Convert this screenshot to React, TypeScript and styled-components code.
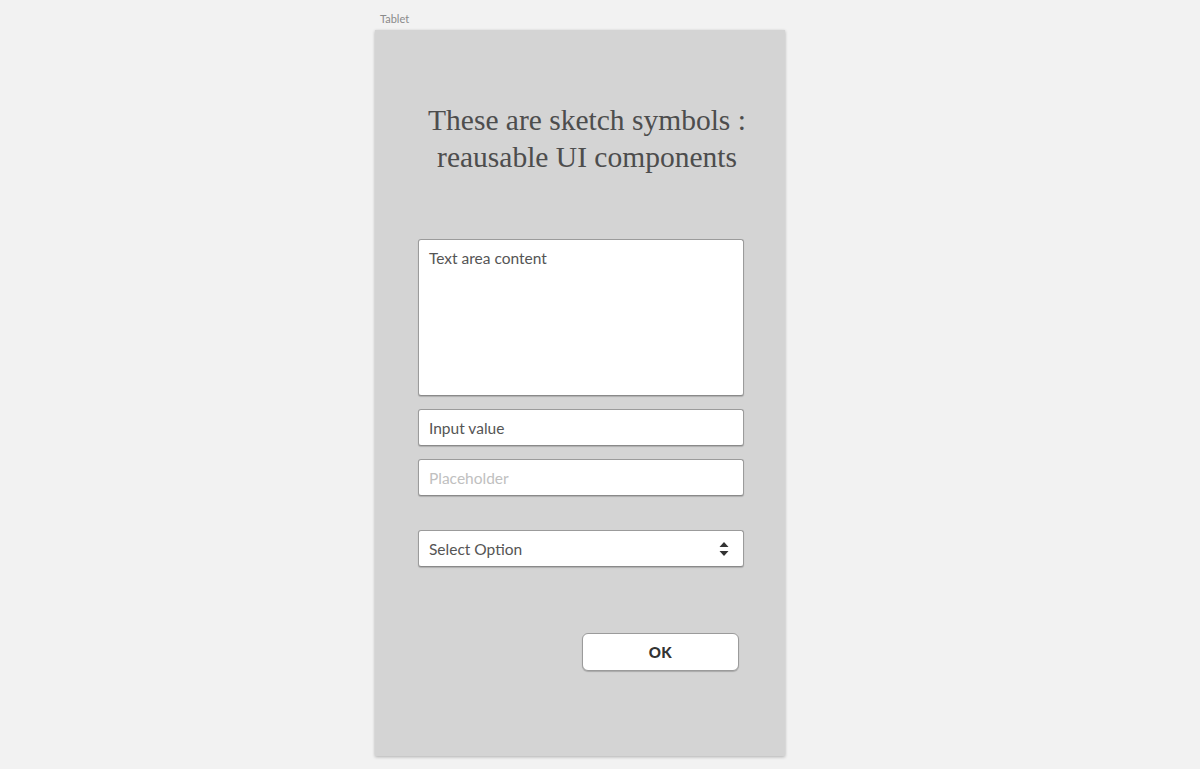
import React from "react";
import styled, { createGlobalStyle } from "styled-components";

const Global = createGlobalStyle`
  html, body { margin: 0; padding: 0; background: #f2f2f2; }
  body { font-family: "Lato", "Noto Sans", sans-serif; }
`;

const Page = styled.div`
  min-height: 769px;
  box-sizing: border-box;
  padding: 12px 0 0 375px;
  display: flex;
  flex-direction: column;
  align-items: flex-start;
`;

const Label = styled.div`
  font-family: "Lato", "Noto Sans", sans-serif;
  font-size: 11px;
  line-height: 14px;
  color: #8a8a8a;
  padding-left: 5px;
  margin-bottom: 4px;
`;

const Artboard = styled.div`
  width: 410px;
  height: 726px;
  background: #d4d4d4;
  box-shadow: 0 1px 3px rgba(0, 0, 0, 0.28);
  display: flex;
  flex-direction: column;
  align-items: center;
  box-sizing: border-box;
  padding-top: 72px;
`;

const Title = styled.h1`
  margin: 0;
  font-family: "Liberation Serif", "DejaVu Serif", serif;
  font-weight: normal;
  font-size: 29.5px;
  line-height: 37px;
  color: #4d4d4d;
  text-align: center;
  transform: translateX(7px);
`;

const Form = styled.div`
  width: 326px;
  align-self: flex-start;
  margin-top: 63px;
  margin-left: 43px;
  display: flex;
  flex-direction: column;
`;

const fieldBase = `
  box-sizing: border-box;
  width: 100%;
  background: #fff;
  border: 1px solid #9b9b9b;
  border-bottom-color: #8a8a8a;
  border-radius: 3px;
  box-shadow: 0 1px 1px rgba(0, 0, 0, 0.18);
  font-family: "Lato", "Noto Sans", sans-serif;
  font-size: 15.5px;
  color: #555;
  padding: 0 10px;
`;

const TextArea = styled.div`
  ${fieldBase}
  height: 157px;
  padding-top: 9px;
  line-height: 18px;
`;

const Field = styled.div<{ $gap: number; $muted?: boolean }>`
  ${fieldBase}
  height: 37px;
  margin-top: ${(p) => p.$gap}px;
  display: flex;
  align-items: center;
  justify-content: space-between;
  color: ${(p) => (p.$muted ? "#c0c0c0" : "#555")};
`;

const Arrows = styled.svg`
  width: 10px;
  height: 18px;
  margin-right: 4px;
`;

const ButtonRow = styled.div`
  display: flex;
  justify-content: flex-end;
  margin-top: 66px;
  padding-right: 5px;
`;

const Button = styled.div`
  box-sizing: border-box;
  width: 157px;
  height: 38px;
  background: #fff;
  border: 1px solid #9b9b9b;
  border-radius: 6px;
  box-shadow: 0 1px 1px rgba(0, 0, 0, 0.2);
  display: flex;
  align-items: center;
  justify-content: center;
  font-family: "Lato", "Noto Sans", sans-serif;
  font-weight: 900;
  font-size: 15px;
  color: #333;
  letter-spacing: 0.5px;
`;

export default function App() {
  return (
    <>
      <Global />
      <Page>
        <Label>Tablet</Label>
        <Artboard>
          <Title>
            These are sketch symbols :
            <br />
            reausable UI components
          </Title>
          <Form>
            <TextArea>Text area content</TextArea>
            <Field $gap={13}>Input value</Field>
            <Field $gap={13} $muted>
              Placeholder
            </Field>
            <Field $gap={34}>
              Select Option
              <Arrows viewBox="0 0 10 18">
                <path d="M5 2 L9.5 7 L0.5 7 Z" fill="#333" />
                <path d="M0.5 11 L9.5 11 L5 16 Z" fill="#333" />
              </Arrows>
            </Field>
            <ButtonRow>
              <Button>OK</Button>
            </ButtonRow>
          </Form>
        </Artboard>
      </Page>
    </>
  );
}
